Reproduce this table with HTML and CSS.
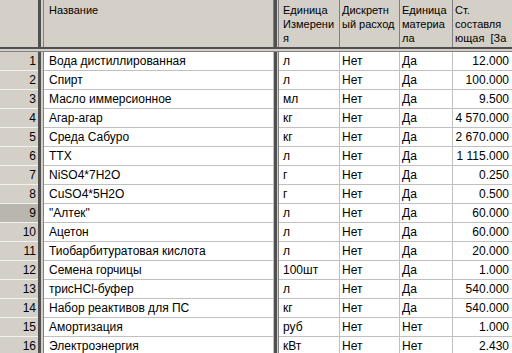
FILE: index.html
```html
<!DOCTYPE html>
<html>
<head>
<meta charset="utf-8">
<link rel="stylesheet" href="styles.css">
</head>
<body>
<div class="grid">
  <div class="hdr">
    <div class="ind"></div>
    <div class="vsep"></div>
    <div class="h name">Название</div>
    <div class="vsep2"></div>
    <div class="h unit">Единица<br>Измерени<br>я</div>
    <div class="h disc">Дискретн<br>ый расход</div>
    <div class="h mat">Единица<br>материа<br>ла</div>
    <div class="h cost">Ст.<br>составля<br>ющая&nbsp; [За</div>
  </div>
  <div class="hsep"></div>
  <div class="row"><div class="ind">1</div><div class="vsep"></div><div class="d name">Вода дистиллированная</div><div class="vsep2"></div><div class="d unit">л</div><div class="d disc">Нет</div><div class="d mat">Да</div><div class="d cost">12.000</div></div>
  <div class="row"><div class="ind">2</div><div class="vsep"></div><div class="d name">Спирт</div><div class="vsep2"></div><div class="d unit">л</div><div class="d disc">Нет</div><div class="d mat">Да</div><div class="d cost">100.000</div></div>
  <div class="row"><div class="ind">3</div><div class="vsep"></div><div class="d name">Масло иммерсионное</div><div class="vsep2"></div><div class="d unit">мл</div><div class="d disc">Нет</div><div class="d mat">Да</div><div class="d cost">9.500</div></div>
  <div class="row"><div class="ind">4</div><div class="vsep"></div><div class="d name">Агар-агар</div><div class="vsep2"></div><div class="d unit">кг</div><div class="d disc">Нет</div><div class="d mat">Да</div><div class="d cost">4&nbsp;570.000</div></div>
  <div class="row"><div class="ind">5</div><div class="vsep"></div><div class="d name">Среда Сабуро</div><div class="vsep2"></div><div class="d unit">кг</div><div class="d disc">Нет</div><div class="d mat">Да</div><div class="d cost">2&nbsp;670.000</div></div>
  <div class="row"><div class="ind">6</div><div class="vsep"></div><div class="d name">ТТХ</div><div class="vsep2"></div><div class="d unit">л</div><div class="d disc">Нет</div><div class="d mat">Да</div><div class="d cost">1&nbsp;115.000</div></div>
  <div class="row"><div class="ind">7</div><div class="vsep"></div><div class="d name">NiSO4*7H2O</div><div class="vsep2"></div><div class="d unit">г</div><div class="d disc">Нет</div><div class="d mat">Да</div><div class="d cost">0.250</div></div>
  <div class="row"><div class="ind">8</div><div class="vsep"></div><div class="d name">CuSO4*5H2O</div><div class="vsep2"></div><div class="d unit">г</div><div class="d disc">Нет</div><div class="d mat">Да</div><div class="d cost">0.500</div></div>
  <div class="row"><div class="ind sel">9</div><div class="vsep"></div><div class="d name">"Алтек"</div><div class="vsep2"></div><div class="d unit">л</div><div class="d disc">Нет</div><div class="d mat">Да</div><div class="d cost">60.000</div></div>
  <div class="row"><div class="ind">10</div><div class="vsep"></div><div class="d name">Ацетон</div><div class="vsep2"></div><div class="d unit">л</div><div class="d disc">Нет</div><div class="d mat">Да</div><div class="d cost">60.000</div></div>
  <div class="row"><div class="ind">11</div><div class="vsep"></div><div class="d name">Тиобарбитуратовая кислота</div><div class="vsep2"></div><div class="d unit">л</div><div class="d disc">Нет</div><div class="d mat">Да</div><div class="d cost">20.000</div></div>
  <div class="row"><div class="ind">12</div><div class="vsep"></div><div class="d name">Семена горчицы</div><div class="vsep2"></div><div class="d unit">100шт</div><div class="d disc">Нет</div><div class="d mat">Да</div><div class="d cost">1.000</div></div>
  <div class="row"><div class="ind">13</div><div class="vsep"></div><div class="d name">трисHCl-буфер</div><div class="vsep2"></div><div class="d unit">л</div><div class="d disc">Нет</div><div class="d mat">Да</div><div class="d cost">540.000</div></div>
  <div class="row"><div class="ind">14</div><div class="vsep"></div><div class="d name">Набор реактивов для ПС</div><div class="vsep2"></div><div class="d unit">кг</div><div class="d disc">Нет</div><div class="d mat">Да</div><div class="d cost">540.000</div></div>
  <div class="row"><div class="ind">15</div><div class="vsep"></div><div class="d name">Амортизация</div><div class="vsep2"></div><div class="d unit">руб</div><div class="d disc">Нет</div><div class="d mat">Нет</div><div class="d cost">1.000</div></div>
  <div class="row"><div class="ind">16</div><div class="vsep"></div><div class="d name">Электроэнергия</div><div class="vsep2"></div><div class="d unit">кВт</div><div class="d disc">Нет</div><div class="d mat">Нет</div><div class="d cost">2.430</div></div>
</div>
</body>
</html>
```

FILE: styles.css
```css
html, body {
  margin: 0;
  padding: 0;
  width: 512px;
  height: 353px;
  overflow: hidden;
  background: #d4d0c8;
}
.grid {
  font-family: "Liberation Sans", Arial, sans-serif;
  font-size: 11px;
  color: #000;
  width: 512px;
  height: 353px;
  overflow: hidden;
}
.hdr, .row {
  display: flex;
}
.hdr {
  height: 47px;
  background: #d4d0c8;
}
.row {
  height: 19px;
  font-size: 12px;
}
.ind {
  width: 38px;
  flex: none;
  box-sizing: border-box;
  background: #d4d0c8;
  text-align: right;
  padding-right: 2px;
  line-height: 18px;
}
.row .ind {
  border-bottom: 1px solid #f2f1ee;
}
.row .ind.sel {
  background: #b9b6ad;
}
.vsep, .vsep2 {
  flex: none;
  box-sizing: border-box;
  background: #d4d0c8;
  border-left: 3px solid #505050;
  border-right: 1px solid #808080;
}
.vsep { width: 6px; }
.vsep2 { width: 5px; }
.hsep {
  height: 5px;
  box-sizing: border-box;
  background: #d4d0c8;
  border-top: 2px solid #505050;
  border-bottom: 1px solid #808080;
}
.h, .d {
  flex: none;
  box-sizing: border-box;
  white-space: nowrap;
  overflow: hidden;
  padding-left: 2px;
}
.h {
  line-height: 14px;
  padding-top: 3px;
  border-right: 1px solid #808080;
  height: 47px;
}
.d {
  background: #fff;
  line-height: 18px;
  border-right: 1px solid #c0c0c0;
  border-bottom: 1px solid #c0c0c0;
}
.name { width: 230px; padding-left: 5px; }
.unit { width: 61px; padding-left: 4px; }
.disc { width: 60px; }
.mat { width: 53px; }
.cost { width: 60px; }
.d.cost { text-align: right; padding-right: 3px; }
```
